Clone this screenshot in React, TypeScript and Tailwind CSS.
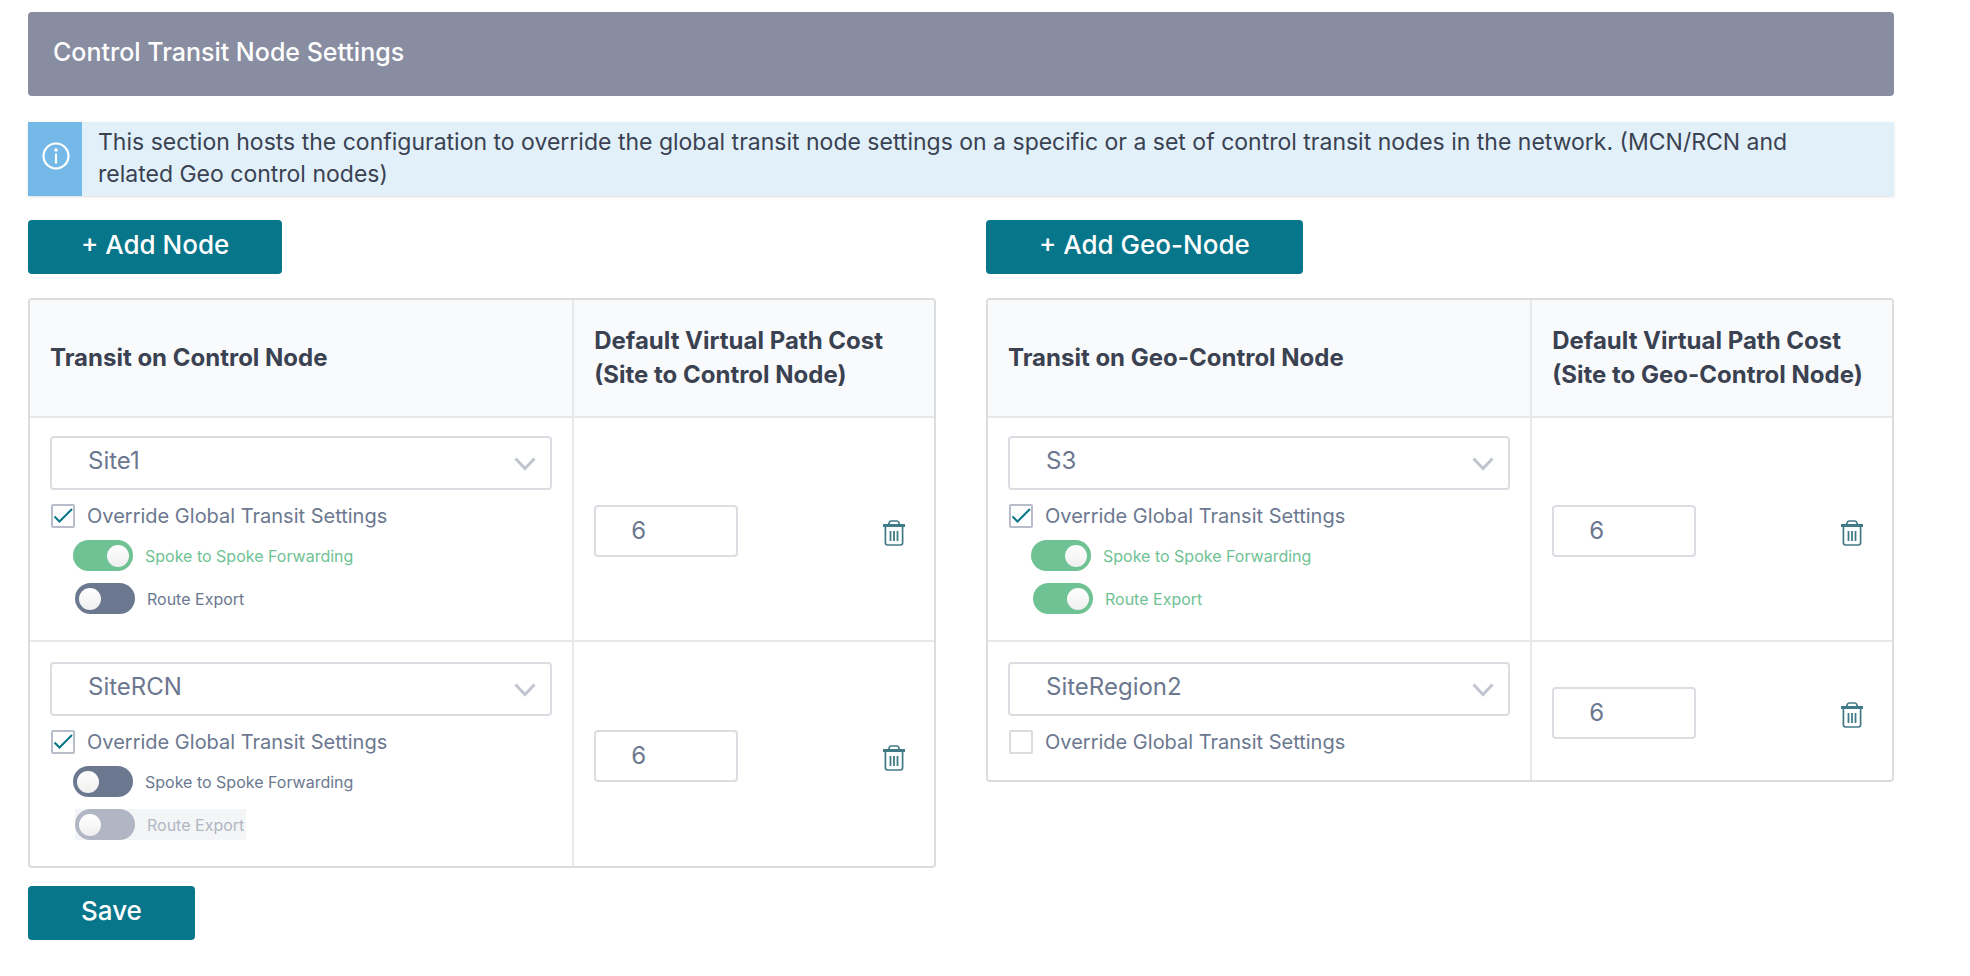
import { useId, useState } from "react";

type Toggle = { on: boolean; disabled?: boolean };

type NodeRow = {
  site: string;
  override: boolean;
  cost: string;
  spoke?: Toggle;
  route?: Toggle;
};

const controlNodes: NodeRow[] = [
  { site: "Site1", override: true, cost: "6", spoke: { on: true }, route: { on: false } },
  { site: "SiteRCN", override: true, cost: "6", spoke: { on: false }, route: { on: false, disabled: true } },
];

const geoNodes: NodeRow[] = [
  { site: "S3", override: true, cost: "6", spoke: { on: true }, route: { on: true } },
  { site: "SiteRegion2", override: false, cost: "6" },
];

function InfoIcon() {
  return (
    <svg width="28" height="28" viewBox="0 0 28 28" fill="none" stroke="white" aria-hidden="true">
      <circle cx="14" cy="14" r="12.5" strokeWidth="2.2" />
      <path d="M14 11.5v10" strokeWidth="2.2" />
      <circle cx="14" cy="8" r="1.8" fill="white" stroke="none" />
    </svg>
  );
}

function TrashIcon() {
  return (
    <svg width="22" height="26" viewBox="0 0 22 26" fill="none" stroke="#417a87" aria-hidden="true">
      <path d="M5.5 4.5L6.5 2q.4-1 1.5-1h6q1.1 0 1.5 1l1 2.5" strokeWidth="1.7" />
      <path d="M0 5.5h22" strokeWidth="3" />
      <path d="M2.4 7v15.8q0 2.2 2.2 2.2h12.8q2.2 0 2.2-2.2V7" strokeWidth="1.7" />
      <path d="M7.5 11v10M11 11v10M14.5 11v10" strokeWidth="1.8" />
    </svg>
  );
}

function SwitchRow({ label, on, disabled = false }: Toggle & { label: string }) {
  const [checked, setChecked] = useState(on);
  return (
    <label
      className={`flex w-fit items-center gap-3 pr-0.5 text-base leading-5 ${
        disabled ? "bg-[#f4f5f7] text-[#b0b6c3]" : checked ? "text-[#6fc294]" : "text-[#6b788f]"
      }`}
    >
      <input
        type="checkbox"
        role="switch"
        checked={checked}
        disabled={disabled}
        onChange={(e) => setChecked(e.target.checked)}
        className="flex h-[31px] w-15 shrink-0 appearance-none items-center rounded-full bg-[#6b788f] px-1 before:h-[22px] before:w-[22px] before:rounded-full before:bg-linear-to-b before:from-white before:to-[#efefef] checked:justify-end checked:bg-[#6fc294] disabled:bg-[#b0b6c3]"
      />
      {label}
    </label>
  );
}

function SiteCell({ row }: { row: NodeRow }) {
  const [override, setOverride] = useState(row.override);
  return (
    <>
      <div className="relative">
        <select
          aria-label="Site"
          defaultValue={row.site}
          className="block h-[54px] w-full appearance-none rounded border-2 border-[#dcdce2] bg-white pb-1 pl-9 text-2xl text-[#6b788f]"
        >
          <option>{row.site}</option>
        </select>
        <svg
          className="pointer-events-none absolute right-4 top-[21px]"
          width="22"
          height="14"
          viewBox="0 0 22 14"
          fill="none"
          stroke="#c0c5d0"
          strokeWidth="3"
          aria-hidden="true"
        >
          <path d="M1.5 1.5L11 11.5L20.5 1.5" />
        </svg>
      </div>

      <label className="mt-3.5 ml-px flex w-fit items-center gap-3 text-xl leading-6 text-[#6b788f]">
        <span className="grid">
          <input
            type="checkbox"
            checked={override}
            onChange={(e) => setOverride(e.target.checked)}
            className="col-start-1 row-start-1 h-6 w-6 appearance-none rounded-xs border-2 border-[#dcdcdf] bg-white checked:border-[#b8bccb]"
          />
          {override && (
            <svg
              className="pointer-events-none col-start-1 row-start-1"
              width="24"
              height="24"
              viewBox="0 0 24 24"
              fill="none"
              stroke="#07758a"
              strokeWidth="2"
              aria-hidden="true"
            >
              <path d="M3.5 12.5L8.5 17.5L21 5" />
            </svg>
          )}
        </span>
        Override Global Transit Settings
      </label>

      {row.spoke && row.route && (
        <div className="mt-3 ml-[23px]">
          <SwitchRow label="Spoke to Spoke Forwarding" {...row.spoke} />
          <div className="mt-3 ml-0.5">
            <SwitchRow label="Route Export" {...row.route} />
          </div>
        </div>
      )}
    </>
  );
}

function NodeTable({ title, costTarget, rows }: { title: string; costTarget: string; rows: NodeRow[] }) {
  const id = useId();
  return (
    <table className="w-full table-fixed border-separate border-spacing-0 overflow-hidden rounded border-2 border-[#dcdddf] text-left">
      <colgroup>
        <col className="w-[60.2%]" />
        <col className="w-[39.8%]" />
      </colgroup>
      <thead className="bg-[#f9fafc] text-2xl leading-[34px] font-semibold text-[#3a4252]">
        <tr>
          <th className="h-[118px] border-r-2 border-b-2 border-[#e5e7e9] px-5">{title}</th>
          <th className="border-b-2 border-[#e5e7e9] pl-5 whitespace-nowrap">
            Default Virtual Path Cost
            <br />
            (Site to {costTarget})
          </th>
        </tr>
      </thead>
      <tbody>
        {rows.map((row, i) => {
          const last = i === rows.length - 1;
          return (
            <tr key={row.site}>
              <td
                className={`border-r-2 border-[#e8e8e9] px-5 align-top ${
                  last ? "pt-5 pb-[26px]" : "border-b-2 pt-[18px] pb-[26px]"
                }`}
              >
                <SiteCell row={row} />
              </td>
              <td className={`border-[#e8e8e9] pt-1 pr-[29px] pl-5 ${last ? "" : "border-b-2"}`}>
                <div className="flex items-center justify-between">
                  <input
                    id={`${id}-${i}`}
                    type="text"
                    aria-label="Virtual path cost"
                    defaultValue={row.cost}
                    className="h-[52px] w-36 rounded border-2 border-[#dcdce2] pb-0.5 pl-[35px] text-2xl text-[#6b788f]"
                  />
                  <button type="button" aria-label={`Delete ${row.site}`} className="pt-1">
                    <TrashIcon />
                  </button>
                </div>
              </td>
            </tr>
          );
        })}
      </tbody>
    </table>
  );
}

function ActionButton({ children }: { children: string }) {
  return (
    <button
      type="button"
      className="h-[54px] w-fit rounded bg-[#07758a] px-[53px] pb-1 text-[26px] leading-8 font-medium text-white"
    >
      {children}
    </button>
  );
}

export default function App() {
  return (
    <main className="min-h-screen bg-white pt-3 pr-19 pb-9 pl-7 font-['Inter','Liberation_Sans',sans-serif]">
      <h1 className="flex h-21 items-center rounded bg-[#898da1] px-[25px] pb-0.5 text-[25px] font-medium text-white">
        Control Transit Node Settings
      </h1>

      <div className="mt-[26px] flex bg-[#e2f0fa] shadow-sm">
        <div className="flex w-[54px] shrink-0 items-center justify-center bg-[#74b9e7] pb-1.5 pl-0.5">
          <InfoIcon />
        </div>
        <p className="pt-1 pr-20 pb-1.5 pl-4 text-[23px] leading-8 text-[#3a4252]">
          This section hosts the configuration to override the global transit node settings on a specific or a set of
          control transit nodes in the network. (MCN/RCN and related Geo control nodes)
        </p>
      </div>

      <div className="mt-6 grid grid-cols-2 items-start gap-x-[50px]">
        <section className="flex flex-col gap-6">
          <ActionButton>+ Add Node</ActionButton>
          <NodeTable title="Transit on Control Node" costTarget="Control Node" rows={controlNodes} />
        </section>
        <section className="flex flex-col gap-6">
          <ActionButton>+ Add Geo-Node</ActionButton>
          <NodeTable title="Transit on Geo-Control Node" costTarget="Geo-Control Node" rows={geoNodes} />
        </section>
      </div>

      <div className="mt-[18px]">
        <ActionButton>Save</ActionButton>
      </div>
    </main>
  );
}
